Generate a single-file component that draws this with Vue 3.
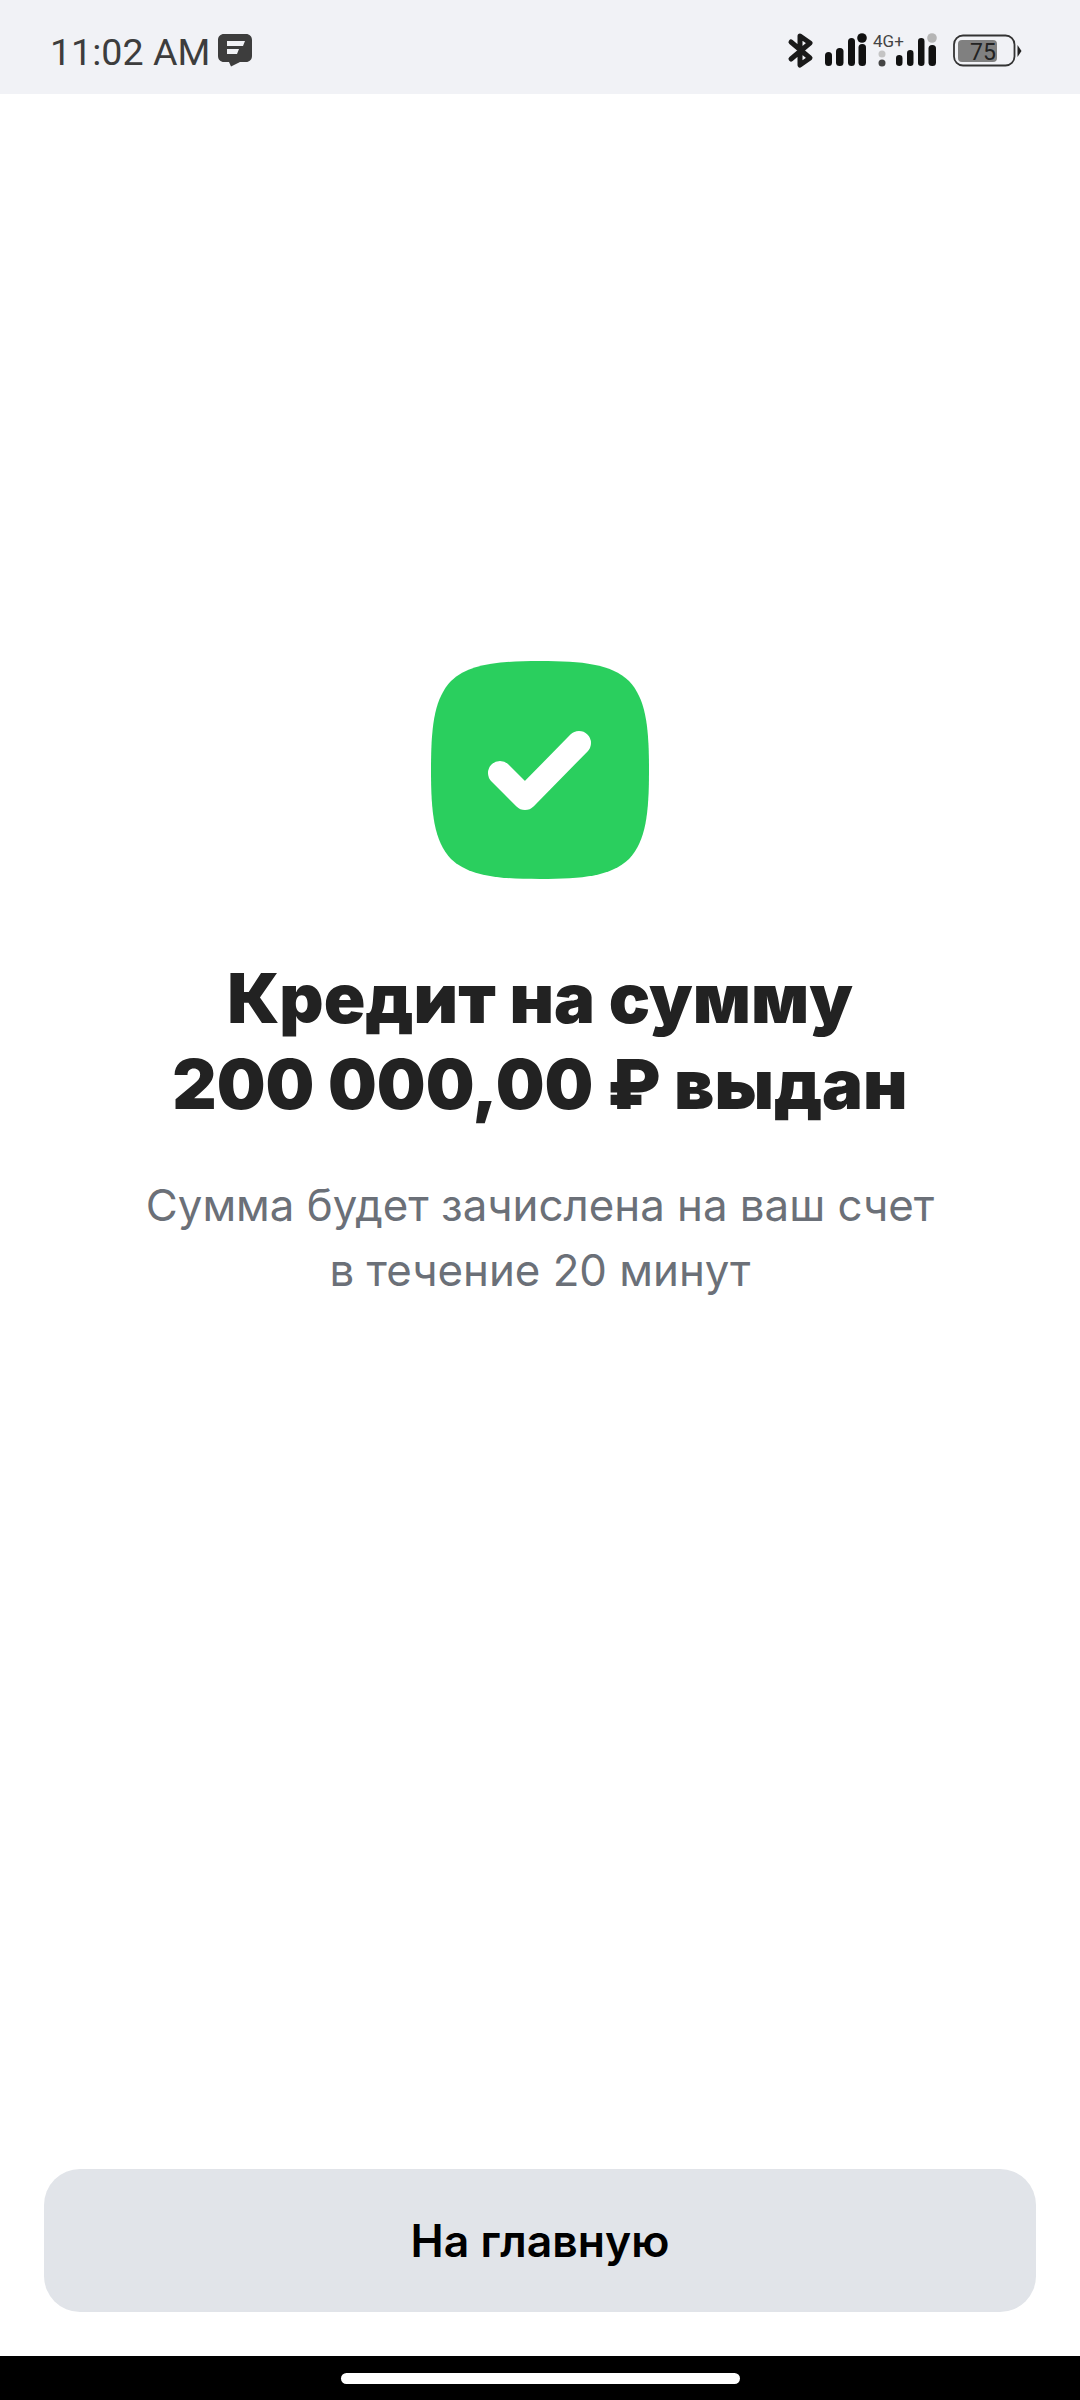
<script setup>
const title = ['Кредит на сумму', '200 000,00 ₽ выдан'];
const subtitle = ['Сумма будет зачислена на ваш счет', 'в течение 20 минут'];
</script>

<template>
  <div class="page">
    <header class="status">
      <div class="status__left">
        <span class="status__time">11:02 AM</span>
        <svg class="status__msg" viewBox="0 0 34 37" width="34" height="37">
          <path d="M6 0H28C31.5 0 34 2.5 34 6V22C34 25.500 31.500 28 28 28H22L13 32.500L11 28H6C2.500 28 0 25.500 0 22V6C0 2.500 2.500 0 6 0Z" fill="#3d3d3d" />
          <path d="M9 7H27L25 12H9ZM9 15H21L19 20H9Z" fill="#f1f2f6" />
        </svg>
      </div>
      <svg class="status__icons" viewBox="0 0 320 94" width="320" height="94">
        <path d="M31 42L50 58L40 65V36L50 43L31 59" fill="none" stroke="#1a1a1a" stroke-width="5" stroke-linejoin="round" stroke-linecap="round" />
        <g fill="#111">
          <rect x="65" y="52" width="7" height="14" rx="3.500" />
          <rect x="76" y="48" width="7.500" height="18" rx="3.500" />
          <rect x="88" y="38" width="7" height="28" rx="3.500" />
          <rect x="98.500" y="44" width="7.500" height="22" rx="3.500" />
          <circle cx="102" cy="38" r="4.800" />
          <rect x="136" y="55" width="6.500" height="11" rx="3.200" />
          <rect x="147" y="50" width="6.500" height="16" rx="3.200" />
          <rect x="158" y="38" width="6.500" height="28" rx="3.200" />
          <rect x="168.500" y="45" width="7.500" height="21" rx="3.500" />
        </g>
        <circle cx="172" cy="38" r="4.800" fill="#b5b5b5" />
        <circle cx="122" cy="54" r="3.500" fill="#c4c4c4" />
        <circle cx="122" cy="63" r="3.500" fill="#444" />
        <text x="113" y="47" class="status__net">4G+</text>
        <rect x="194" y="35.500" width="60.500" height="30" rx="9" fill="none" stroke="#333" stroke-width="1.800" />
        <rect x="198" y="40" width="39" height="22" rx="4" fill="#808080" />
        <text x="223" y="60" text-anchor="middle" class="status__level">75</text>
        <path d="M257.500 45L261.500 51L257.500 57Z" fill="#222" />
      </svg>
    </header>

    <main class="result">
      <svg class="result__icon" viewBox="0 0 218 218" width="218" height="218">
        <path d="M109 0C152 0 180 3 198 20C215 38 218 66 218 109C218 152 215 180 198 198C180 215 152 218 109 218C66 218 38 215 20 198C3 180 0 152 0 109C0 66 3 38 20 20C38 3 66 0 109 0Z" fill="#2acf5e" />
        <path d="M69 112L94 137L148 82" fill="none" stroke="#fff" stroke-width="24" stroke-linecap="round" stroke-linejoin="round" />
      </svg>
      <h1 class="result__title">
        <span v-for="line in title" :key="line">{{ line }}</span>
      </h1>
      <p class="result__text">
        <span v-for="line in subtitle" :key="line">{{ line }}</span>
      </p>
    </main>

    <div class="actions">
      <button class="actions__btn" type="button">На главную</button>
    </div>

    <nav class="nav">
      <span class="nav__pill"></span>
    </nav>
  </div>
</template>

<style scoped>
.page {
  display: flex;
  flex-direction: column;
  width: 1080px;
  height: 2400px;
  background: #fff;
  font-family: Inter, "Noto Sans", sans-serif;
}

.status {
  display: flex;
  flex: none;
  justify-content: space-between;
  height: 94px;
  background: #f1f2f6;
}

.status__left {
  display: flex;
  align-items: flex-start;
  gap: 8px;
  padding-left: 50px;
}

.status__time {
  margin-top: 30px;
  font-family: Roboto, sans-serif;
  font-size: 37.600px;
  line-height: 44px;
  color: #3d3d3d;
}

.status__msg {
  margin-top: 34px;
}

.status__net {
  font-family: Roboto, sans-serif;
  font-size: 17px;
  fill: #444;
}

.status__level {
  font-family: Roboto, sans-serif;
  font-size: 23px;
  fill: #222;
}

.result {
  display: flex;
  flex: 1;
  flex-direction: column;
  align-items: center;
  padding-top: 567px;
}

.result__icon {
  display: block;
}

.result__title {
  margin: 76px 0 0;
  font-size: 68.700px;
  font-weight: 900;
  line-height: 86px;
  color: #222;
  text-align: center;
}

.result__title span,
.result__text span {
  display: block;
}

.result__text {
  margin: 46px 0 0;
  font-size: 43.800px;
  font-weight: 400;
  line-height: 65px;
  color: #6b7078;
  text-align: center;
}

.actions {
  flex: none;
  padding: 0 44px 44px;
}

.actions__btn {
  display: block;
  width: 100%;
  height: 143px;
  border: 0;
  border-radius: 36px;
  background: #e1e4e9;
  font-family: inherit;
  font-size: 44.500px;
  font-weight: 600;
  color: #000;
}

.nav {
  display: flex;
  flex: none;
  align-items: center;
  justify-content: center;
  height: 44px;
  background: #000;
}

.nav__pill {
  width: 399px;
  height: 11px;
  border-radius: 6px;
  background: #fff;
}
</style>
